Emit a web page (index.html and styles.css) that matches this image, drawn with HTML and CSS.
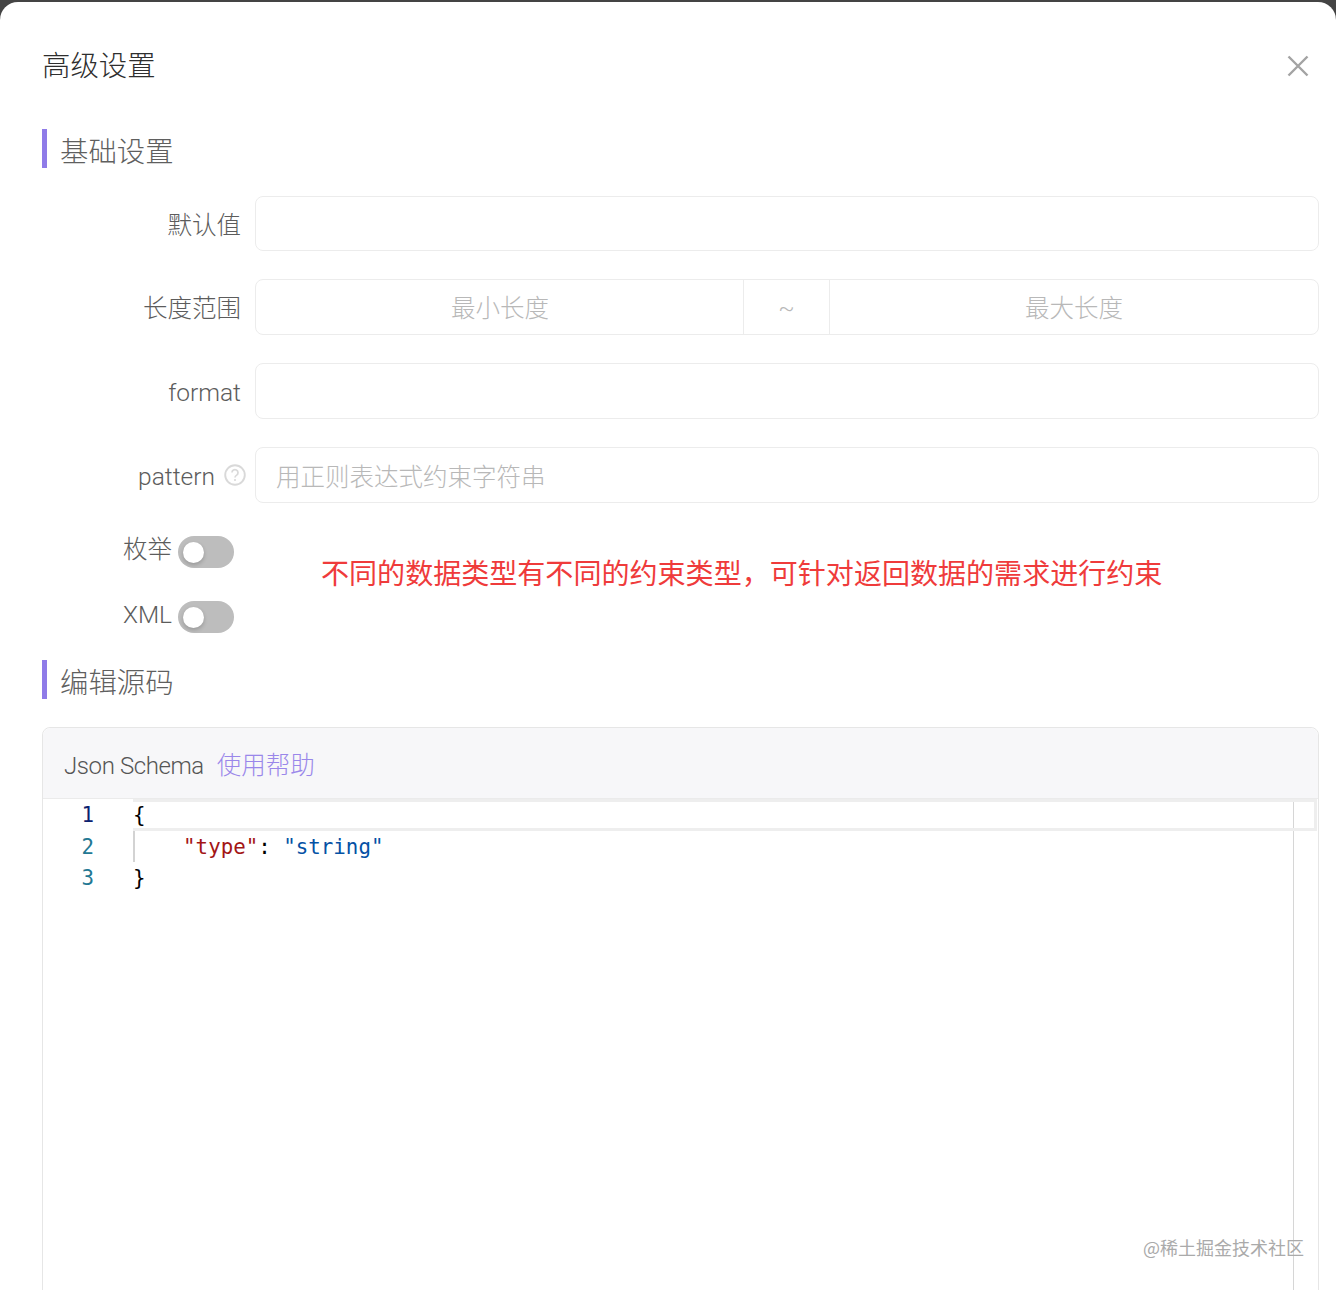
FILE: index.html
```html
<!DOCTYPE html>
<html lang="zh-CN">
<head>
<meta charset="utf-8">
<title>高级设置</title>
<link rel="stylesheet" href="styles.css">
</head>
<body>
<div class="modal">
  <header class="modal-head">
    <h1 class="modal-title">高级设置</h1>
    <button class="close-btn" aria-label="关闭">
      <svg width="22" height="22" viewBox="0 0 22 22"><path d="M1.5 1.5 20.5 20.5M20.5 1.5 1.5 20.5" fill="none" stroke="#a3a3a3" stroke-width="2.4"/></svg>
    </button>
  </header>

  <h2 class="section-title">基础设置</h2>
  <div class="form">
    <div class="row row-first">
      <label class="row-label">默认值</label>
      <input class="field" type="text">
    </div>
    <div class="row">
      <label class="row-label">长度范围</label>
      <div class="range">
        <input class="range-input" type="text" placeholder="最小长度">
        <span class="range-sep">~</span>
        <input class="range-input" type="text" placeholder="最大长度">
      </div>
    </div>
    <div class="row">
      <label class="row-label">format</label>
      <input class="field" type="text">
    </div>
    <div class="row">
      <label class="row-label row-label-help">pattern
        <svg class="help" width="22" height="22" viewBox="0 0 22 22"><circle cx="11" cy="11" r="9.8" fill="none" stroke="#d9d9d9" stroke-width="1.9"/><path d="M8 8.6a3 3 0 1 1 4.7 2.5c-1.1.7-1.7 1.2-1.7 2.4" fill="none" stroke="#d9d9d9" stroke-width="1.7"/><circle cx="11" cy="16" r="1.1" fill="#d9d9d9"/></svg>
      </label>
      <input class="field field-help" type="text" placeholder="用正则表达式约束字符串">
    </div>
  </div>

  <div class="switches">
    <div class="switch-row">
      <span class="switch-label">枚举</span>
      <span class="switch"><span class="knob"></span></span>
    </div>
    <div class="switch-row">
      <span class="switch-label">XML</span>
      <span class="switch"><span class="knob"></span></span>
    </div>
    <p class="note">不同的数据类型有不同的约束类型，可针对返回数据的需求进行约束</p>
  </div>

  <h2 class="section-title section-source">编辑源码</h2>
  <section class="editor-card">
    <div class="editor-head">
      <span class="editor-name">Json Schema</span>
      <a class="editor-help">使用帮助</a>
    </div>
    <div class="editor">
      <div class="line line-active">
        <span class="num num-active">1</span>
        <code class="code"><span class="p">{</span></code>
      </div>
      <div class="line">
        <span class="num">2</span>
        <code class="code code-guide">    <span class="k">"type"</span><span class="p">: </span><span class="s">"string"</span></code>
      </div>
      <div class="line">
        <span class="num">3</span>
        <code class="code"><span class="p">}</span></code>
      </div>
      <div class="ruler"></div>
    </div>
  </section>
  <div class="watermark">@稀土掘金技术社区</div>
</div>
</body>
</html>
```

FILE: styles.css
```css
* { box-sizing: border-box; }

html, body {
  margin: 0;
  height: 1290px;
  overflow: hidden;
  background: #444;
}

body {
  padding-top: 2px;
  font-family: Roboto, "Noto Sans CJK SC", sans-serif;
}

.modal {
  position: relative;
  height: 1288px;
  padding: 0 17px 0 42px;
  background: #fff;
  border-radius: 18px 18px 0 0;
  overflow: hidden;
}

.modal-head {
  display: flex;
  justify-content: space-between;
  align-items: flex-start;
  height: 127px;
  padding-top: 42px;
}

.modal-title {
  margin: 0;
  font: 300 28.4px/40px "Noto Sans CJK SC", sans-serif;
  color: #2e2e2e;
}

.close-btn {
  display: flex;
  margin: 11px 10px 0 0;
  padding: 0;
  border: 0;
  background: none;
}

.section-title {
  height: 39px;
  margin: 0;
  padding-left: 13px;
  border-left: 5px solid #8f7be8;
  font: 300 28.4px/41px "Noto Sans CJK SC", sans-serif;
  color: #5f5f5f;
}

.form {
  display: flex;
  flex-direction: column;
  gap: 28px;
  margin-top: 28px;
}

.row {
  display: flex;
  align-items: center;
  height: 56px;
}

.row-first { height: 55px; }

.row-label {
  display: flex;
  align-items: center;
  justify-content: flex-end;
  flex: 0 0 199px;
  padding-top: 4px;
  font: 300 24.5px/36px Roboto, "Noto Sans CJK SC", sans-serif;
  color: #5c5c5c;
}

.row-label-help {
  gap: 9px;
  flex-basis: 204px;
}

.help { margin-top: -4px; }

.field,
.range {
  flex: 1;
  height: 100%;
  min-width: 0;
  margin-left: 14px;
  border: 1px solid #ececec;
  border-radius: 8px;
  background: #fff;
}

.field {
  padding: 0 20px;
  font: 300 24.5px/36px "Noto Sans CJK SC", sans-serif;
  color: #666;
  outline: none;
}

.field-help { margin-left: 9px; }

.field::placeholder,
.range-input::placeholder {
  color: #b8b8b8;
  opacity: 1;
}

.range {
  display: flex;
  overflow: hidden;
}

.range-input {
  flex: 1;
  min-width: 0;
  border: 0;
  padding: 0;
  text-align: center;
  font: 300 24.5px/36px "Noto Sans CJK SC", sans-serif;
  outline: none;
  background: transparent;
}

.range-sep {
  flex: 0 0 87px;
  margin-left: -1px;
  border-left: 1px solid #ececec;
  border-right: 1px solid #ececec;
  text-align: center;
  font: 300 24px/56px Roboto, sans-serif;
  color: #b8b8b8;
}

.switches {
  position: relative;
  margin-top: 33px;
}

.switch-row {
  display: flex;
  align-items: center;
  justify-content: flex-end;
  gap: 6px;
  width: 192px;
  height: 32px;
  margin-bottom: 33px;
}

.switch-label {
  font: 300 24.5px/32px Roboto, "Noto Sans CJK SC", sans-serif;
  color: #5c5c5c;
  transform: translateY(-2px);
}

.switch {
  display: flex;
  align-items: center;
  width: 56px;
  height: 32px;
  padding-left: 5px;
  border-radius: 16px;
  background: #bdbdbd;
}

.knob {
  width: 21px;
  height: 21px;
  border-radius: 50%;
  background: #fff;
  box-shadow: 0 2px 4px rgba(0, 0, 0, .2);
}

.note {
  position: absolute;
  left: 279px;
  top: 16px;
  margin: 0;
  font: 400 28.05px/40px "Noto Sans CJK SC", sans-serif;
  color: #ef3b3b;
  white-space: nowrap;
}

.section-source { margin-top: -6px; }

.editor-card {
  height: 600px;
  margin-top: 28px;
  border: 1px solid #e6e6e6;
  border-radius: 8px 8px 0 0;
}

.editor-head {
  display: flex;
  align-items: center;
  gap: 13px;
  height: 71px;
  padding-left: 21px;
  background: #f7f7f9;
  border-bottom: 1px solid #ebebeb;
  border-radius: 8px 8px 0 0;
}

.editor-name {
  padding-top: 5px;
  font: 300 24px/36px Roboto, sans-serif;
  letter-spacing: -.4px;
  color: #555;
}

.editor-help {
  padding-top: 2px;
  font: 300 24.5px/36px "Noto Sans CJK SC", sans-serif;
  color: #9a87ea;
}

.editor {
  position: relative;
  height: 520px;
}

.line {
  display: flex;
  height: 31.25px;
  font: 400 20.8px/32px "DejaVu Sans Mono", monospace;
}

.line-active {
  height: 32px;
  position: relative;
  z-index: 1;
  margin-right: 1px;
}

.line-active .code {
  border: 3px solid #eee;
  border-left: 0;
  line-height: 27px;
}

.num {
  flex: 0 0 51px;
  text-align: right;
  color: #237893;
}

.num-active { color: #0b216f; }

.code {
  flex: 1;
  margin-left: 39px;
  font: inherit;
  white-space: pre;
  color: #000;
}

.code-guide { box-shadow: inset 2px 0 0 #d3d3d3; }

.k { color: #a31515; }
.s { color: #0451a5; }
.p { color: #000; }

.ruler {
  position: absolute;
  top: 0;
  right: 24px;
  bottom: 0;
  width: 1px;
  background: #d6d6d6;
}

.watermark {
  position: absolute;
  right: 32px;
  top: 1232px;
  font: 400 18px/26px "Noto Sans CJK SC", sans-serif;
  color: #aaa;
  white-space: nowrap;
}
```
